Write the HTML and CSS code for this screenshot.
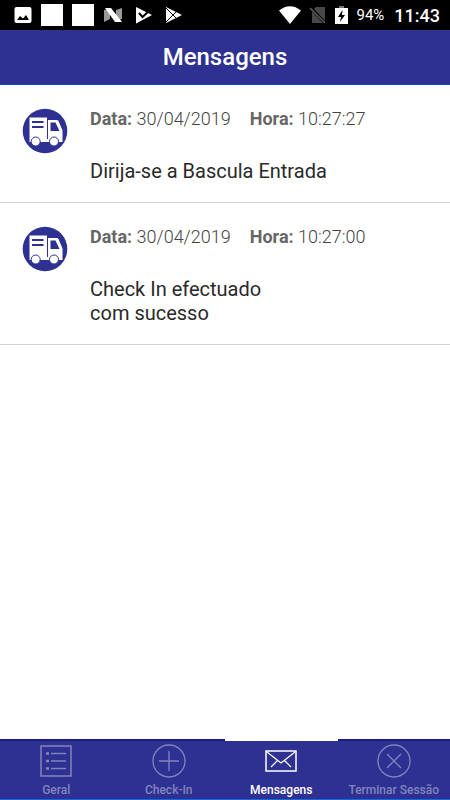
FILE: index.html
```html
<!DOCTYPE html>
<html lang="pt">
<head>
<meta charset="utf-8">
<meta name="viewport" content="width=device-width, initial-scale=1">
<title>Mensagens</title>
<link rel="stylesheet" href="styles.css">
</head>
<body>
<svg class="defs" aria-hidden="true">
  <symbol id="truck" viewBox="0 0 46 46">
    <circle cx="23" cy="23" r="22.300" fill="#2e3192"/>
    <path d="M7.500 9.500H25v24.500H7.500zM26 12h8.500q1.500 0 2 1l4 9.500v11.500H26z" fill="#fff"/>
    <path d="M24 31h4v3h-4z" fill="#fff"/>
    <path d="M28.500 14.500h5l4 8.500h-9z" fill="#2e3192"/>
    <path d="M10 14h11.500M10 19h11.500" stroke="#2e3192" stroke-width="2"/>
    <circle cx="13.700" cy="33.500" r="4.500" fill="#fff" stroke="#2e3192"/>
    <circle cx="32" cy="33.500" r="4.500" fill="#fff" stroke="#2e3192"/>
  </symbol>
</svg>
<div class="app">
  <div class="status">
    <div class="notices">
      <svg width="18" height="18" viewBox="0 0 18 18"><rect x=".5" y="1" width="17" height="16" rx="2" fill="#fff"/><path d="M3 14l3-4 3 2.500 3-3.500 3 5z" fill="#000"/></svg>
      <svg width="22" height="22" viewBox="0 0 22 22"><path d="M0 0h22v22H0z" fill="#fff"/></svg>
      <svg width="22" height="22" viewBox="0 0 22 22"><path d="M0 0h22v22H0z" fill="#fff"/></svg>
      <svg width="20" height="16" viewBox="0 0 20 16"><path d="M1 3l6-1v10l-6 3zM13 3l6-2v11l-6 2z" fill="#999"/><path d="M2 1h6l11 14h-7z" fill="#fff"/></svg>
      <svg width="18" height="18" viewBox="0 0 18 18"><path d="M1 1l16 8L1 17.500z" fill="#fff"/><path d="M4 7l3.500 4L15 4" fill="none" stroke="#000" stroke-width="2"/></svg>
      <svg width="18" height="18" viewBox="0 0 18 18"><path d="M1 1l16 8L1 17z" fill="#fff"/><path d="M1 2l11 11M1 16L12 5" stroke="#000" stroke-width="1"/></svg>
    </div>
    <div class="system">
      <svg width="22" height="18" viewBox="0 0 22 18"><path d="M0 4.500Q11-4 22 4.500L11 18z" fill="#fff"/></svg>
      <svg width="18" height="18" viewBox="0 0 18 18"><path d="M7 1h9v16H3V5z" fill="#484848"/><path d="M1 1l15 16" stroke="#000" stroke-width="3"/><path d="M1 2l15 15" stroke="#666" stroke-width="1.300"/></svg>
      <svg width="13" height="18" viewBox="0 0 13 18"><path d="M4 0h5v2H4z" fill="#777"/><path d="M0 2h13v16H0z" fill="#fff"/><path d="M7.500 4L3 11h3l-1 5 5-7H7z" fill="#000"/></svg>
      <span class="battery">94%</span>
      <span class="clock">11:43</span>
    </div>
  </div>
  <header class="header"><h1>Mensagens</h1></header>
  <main class="messages">
    <article class="message">
      <svg class="truck" aria-hidden="true"><use href="#truck"/></svg>
      <div>
        <div class="meta"><span><b>Data:</b> 30/04/2019</span><span><b>Hora:</b> 10:27:27</span></div>
        <p>Dirija-se a Bascula Entrada</p>
      </div>
    </article>
    <article class="message">
      <svg class="truck" aria-hidden="true"><use href="#truck"/></svg>
      <div>
        <div class="meta"><span><b>Data:</b> 30/04/2019</span><span><b>Hora:</b> 10:27:00</span></div>
        <p>Check In efectuado<br>com sucesso</p>
      </div>
    </article>
  </main>
  <nav class="tabs">
    <a class="tab" href="#geral">
      <svg width="34" height="34" viewBox="0 0 34 34" fill="none" stroke="currentColor"><rect x="2" y="2" width="30" height="30" stroke-width="1.500"/><path d="M12 9.500h15M12 17h15M12 24.500h15" stroke-width="1.300"/><path d="M7 9.500h3M7 17h3M7 24.500h3" stroke-width="2.500"/></svg>
      <span>Geral</span>
    </a>
    <a class="tab" href="#checkin">
      <svg width="34" height="34" viewBox="0 0 34 34" fill="none" stroke="currentColor" stroke-width="1.300"><circle cx="17" cy="17" r="16"/><path d="M7 17h20M17 7v20"/></svg>
      <span>Check-In</span>
    </a>
    <a class="tab active" href="#mensagens" aria-current="page">
      <svg width="34" height="34" viewBox="0 0 34 34" fill="none" stroke="currentColor" stroke-width="1.500"><rect x="2" y="7" width="30" height="20"/><path d="M3 8l14 11L31 8M7 23l6.500-6.500M27 23l-6.500-6.500" stroke-width="1.200"/></svg>
      <span>Mensagens</span>
    </a>
    <a class="tab" href="#sair">
      <svg width="34" height="34" viewBox="0 0 34 34" fill="none" stroke="currentColor" stroke-width="1.300"><circle cx="17" cy="17" r="16"/><path d="M10 10l14 14M24 10L10 24"/></svg>
      <span>Terminar Sessão</span>
    </a>
  </nav>
</div>
</body>
</html>
```
FILE: styles.css
```css
* { box-sizing: border-box; }
body { margin: 0; font-family: Roboto, sans-serif; background: #fff; }
.defs { position: absolute; width: 0; height: 0; }
.app { display: flex; flex-direction: column; min-height: 100vh; }
.status {
  display: flex; justify-content: space-between; align-items: center;
  height: 30px; padding: 0 10px 0 14px; background: #000; color: #fff;
}
.notices, .system { display: flex; align-items: center; }
.notices { gap: 9px; }
.notices svg:nth-child(n+5) { margin-left: 3px; }
.system { gap: 8px; }
.battery { font-size: 15px; }
.clock { font-size: 18px; font-weight: 500; margin-left: 2px; }
.header {
  height: 55px; background: #2e3192;
  border-bottom: 1px solid #0f48cf; color: #fff;
  display: flex; align-items: center; justify-content: center;
}
.header h1 { margin: 0; font-size: 24px; line-height: 28px; font-weight: 500; }
.messages { flex: 1; }
.message {
  display: flex; gap: 22px; padding: 23px 22px 19px;
  border-bottom: 1px solid #d2d2d2;
}
.truck { width: 46px; height: 46px; flex: none; }
.meta { display: flex; gap: 19px; font-size: 18px; line-height: 22px; font-weight: 300; color: #444; }
.meta b { font-weight: 700; color: #666; }
.message p { margin: 29px 0 0; font-size: 20px; line-height: 24px; color: #2a2a2a; }
.tabs {
  display: grid; grid-template-columns: repeat(4, 1fr);
  height: 61px; background: #2e3192; border-bottom: 1px solid #1668de;
}
.tab {
  display: flex; flex-direction: column; align-items: center; gap: 4px;
  padding-top: 3px; border-top: 2px solid #1b1c85;
  color: #8284bd; text-decoration: none; font-size: 12px; line-height: 16px; font-weight: 500; white-space: nowrap;
}
.tab.active { color: #fff; border-top-color: #fff; }
```
